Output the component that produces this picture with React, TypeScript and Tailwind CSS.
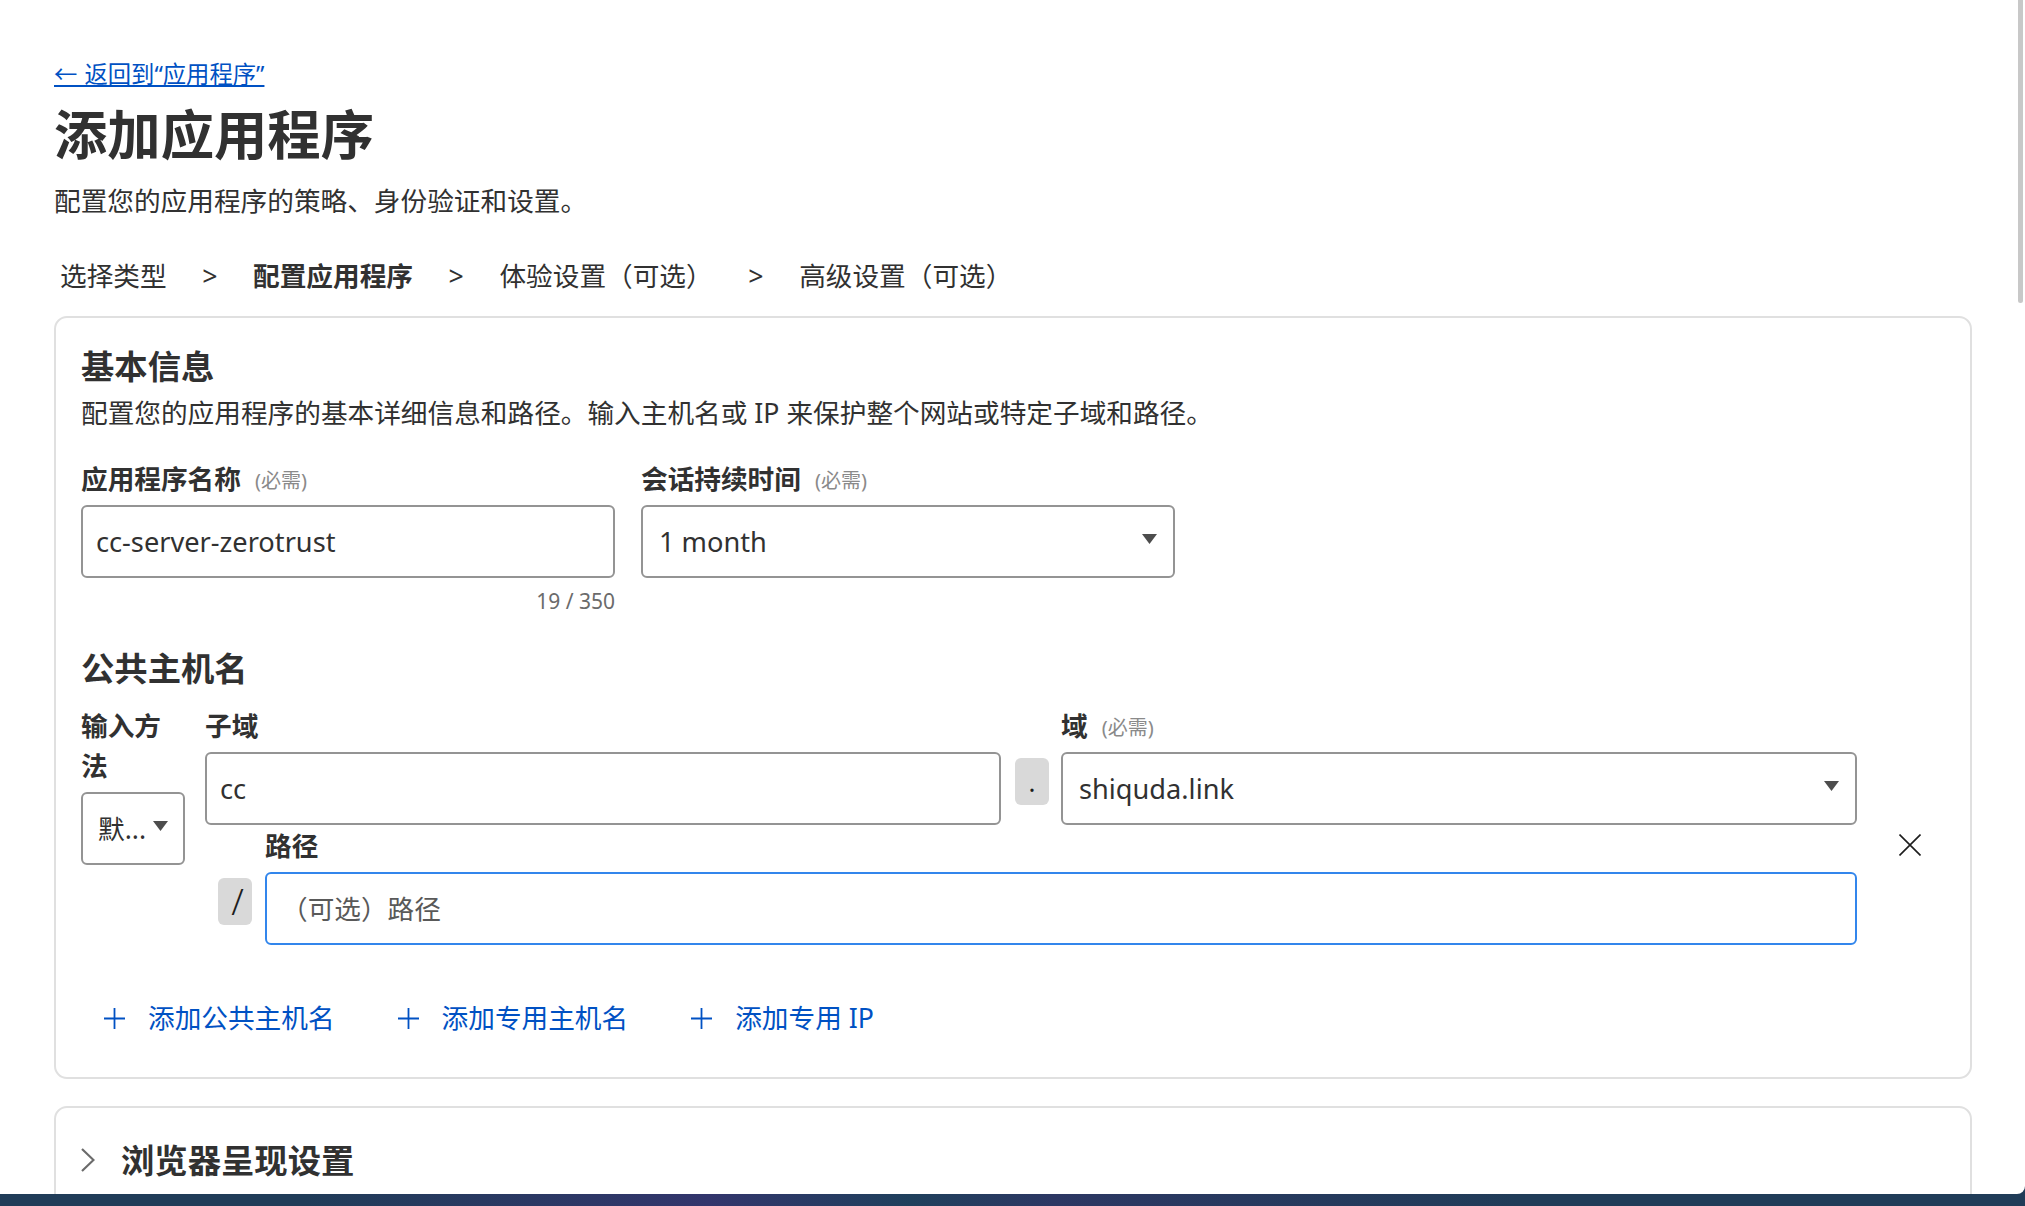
import React from 'react';

const Required = () => <span className="relative -top-[1px] ml-[14px] text-[20px] font-normal text-[#8a8a8a]">(必需)</span>;

const Caret = () => (
  <svg width="15" height="10" viewBox="0 0 15 10" className="shrink-0">
    <path d="M0 0h15L7.5 10z" fill="#4d4d4d" />
  </svg>
);

const Box: React.FC<{ children?: React.ReactNode; className?: string }> = ({ children, className = 'border-[#949494]' }) => (
  <div className={`flex h-[73px] items-center rounded-[6px] border-2 bg-white text-[#313131] ${className}`}>
    {children}
  </div>
);

const Select: React.FC<{ value: string; className?: string }> = ({ value, className = '' }) => (
  <Box className={`justify-between border-[#949494] pl-[16px] pr-[16px] ${className}`}>
    <span className="text-[27.2px]">{value}</span>
    <span className="-mt-[5px]"><Caret /></span>
  </Box>
);

const Chip: React.FC<{ children: React.ReactNode; className?: string }> = ({ children, className = '' }) => (
  <div className={`flex h-[47px] w-[34px] shrink-0 items-center justify-center rounded-[6px] bg-[#d9d9d9] text-[#1d1d1d] ${className}`}>
    {children}
  </div>
);

const AddLink: React.FC<{ label: string }> = ({ label }) => (
  <button className="flex items-center gap-[23px] pl-[23px] pr-[22px] text-[#0051c3]">
    <svg width="21" height="21" viewBox="0 0 21 21" stroke="#0051c3" strokeWidth="1.8">
      <path d="M10.5 0v21M0 10.5h21" />
    </svg>
    <span>{label}</span>
  </button>
);

export default function App() {
  return (
    <div className="flex h-screen flex-col overflow-hidden bg-[#203c58] font-['Noto_Sans','Noto_Sans_CJK_SC',sans-serif] text-[26.67px] leading-[40px] text-[#313131]">
      <main className="relative min-h-0 flex-1 overflow-hidden rounded-br-[8px] bg-white pl-[54px] pr-[53px] pt-[58px]">
        {/* scrollbar thumb */}
        <div className="absolute right-[2px] top-0 h-[303px] w-[5px] rounded-b-[3px] bg-[#c8c8c8]" />

        <a href="#" className="block text-[23.33px] leading-[32px] text-[#0051c3] underline [word-spacing:1px]">← 返回到“应用程序”</a>
        <h1 className="mt-[13px] text-[53.33px] font-bold leading-[64px]">添加应用程序</h1>
        <p className="mt-[14px]">配置您的应用程序的策略、身份验证和设置。</p>

        <div className="mt-[35px] flex gap-[35.6px] pl-[6px]">
          <span>选择类型</span>
          <span>&gt;</span>
          <span className="font-bold">配置应用程序</span>
          <span>&gt;</span>
          <span>体验设置（可选）</span>
          <span>&gt;</span>
          <span>高级设置（可选）</span>
        </div>

        <section className="mt-[20px] rounded-[13px] border-2 border-[#e0e0e0] pb-[39px] pl-[25px] pr-[26px] pt-[26px]">
          <h2 className="text-[33.33px] font-bold leading-[44px]">基本信息</h2>
          <p className="mt-[5px]">配置您的应用程序的基本详细信息和路径。输入主机名或 IP 来保护整个网站或特定子域和路径。</p>

          <div className="mt-[28px] flex gap-[26px]">
            <div className="w-[534px]">
              <label className="block h-[36px] font-bold leading-[35px]">应用程序名称<Required /></label>
              <div className="mt-[8px]"><Box className="border-[#949494] px-[13px]"><span className="text-[27.2px]">cc-server-zerotrust</span></Box></div>
              <div className="mt-[9px] text-right text-[21px] leading-[28px] text-[#6b6b6b]">19 / 350</div>
            </div>
            <div className="w-[534px]">
              <label className="block h-[36px] font-bold leading-[35px]">会话持续时间<Required /></label>
              <div className="mt-[8px]"><Select value="1 month" /></div>
            </div>
          </div>

          <h2 className="mt-[31px] text-[33.33px] font-bold leading-[44px]">公共主机名</h2>

          <div className="flex">
            <div className="mt-[17px] w-[104px] shrink-0">
              <label className="-mt-[1px] block font-bold">输入方法</label>
              <div className="mt-[6px]">
                <Box className="justify-between border-[#949494] pl-[15px] pr-[15px]">
                  <span>默...</span>
                  <span className="-mt-[5px]"><Caret /></span>
                </Box>
              </div>
            </div>

            <div className="ml-[20px] mt-[17px] w-[1652px] shrink-0">
              <div className="flex items-start">
                <div className="w-[796px]">
                  <label className="block h-[40px] font-bold leading-[38px]">子域</label>
                  <div className="mt-[5px]"><Box className="border-[#949494] px-[13px]"><span className="text-[27.2px]">cc</span></Box></div>
                </div>
                <div className="ml-[14px] mt-[51px]"><Chip className="text-[26px]">.</Chip></div>
                <div className="ml-[12px] w-[796px]">
                  <label className="block h-[40px] font-bold leading-[37px]">域<Required /></label>
                  <div className="mt-[5px]"><Select value="shiquda.link" /></div>
                </div>
              </div>
              <div className="flex items-start pl-[13px]">
                <div className="mt-[53px]"><Chip className="pl-[5px] text-[36px] font-light">/</Chip></div>
                <div className="ml-[13px] flex-1">
                  <label className="mt-[3px] block h-[36px] font-bold leading-[36px]">路径</label>
                  <div className="mt-[8px]"><Box className="border-[#3286ec] px-[14px]"><span className="text-[#595959]">（可选）路径</span></Box></div>
                </div>
              </div>
            </div>

            <button className="ml-[42px] mt-[144px] h-[22px] w-[22px] shrink-0">
              <svg width="22" height="22" viewBox="0 0 22 22" stroke="#1d1d1d" strokeWidth="1.6">
                <path d="M0.5 0.5l21 21M21.5 0.5l-21 21" />
              </svg>
            </button>
          </div>

          <div className="mt-[53px] flex gap-[18px]">
            <AddLink label="添加公共主机名" />
            <AddLink label="添加专用主机名" />
            <AddLink label="添加专用 IP" />
          </div>
        </section>

        <section className="mt-[27px] rounded-[13px] border-2 border-[#e0e0e0] px-[25px] pb-[40px] pt-[30px]">
          <div className="flex items-center gap-[26px]">
            <svg width="14" height="24" viewBox="0 0 14 24" fill="none" stroke="#6b6b6b" strokeWidth="2.2">
              <path d="M1 1l11.5 11L1 23" />
            </svg>
            <h2 className="text-[33.33px] font-bold leading-[44px]">浏览器呈现设置</h2>
          </div>
        </section>
      </main>
      <div className="h-[12px] shrink-0 bg-[linear-gradient(90deg,#203c58_0%,#203c58_15%,#32356c_35%,#1f405c_45%,#2c3763_52%,#203c58_75%,#203c58_100%)]" />
    </div>
  );
}
